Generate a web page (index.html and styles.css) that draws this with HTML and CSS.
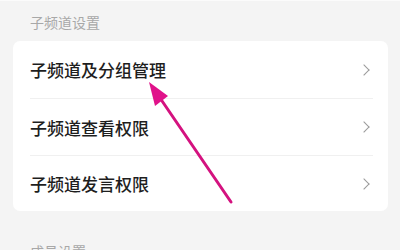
FILE: index.html
```html
<!DOCTYPE html>
<html lang="zh">
<head>
<meta charset="utf-8">
<link rel="stylesheet" href="styles.css">
</head>
<body>
<div class="page">
  <div class="section-title">子频道设置</div>
  <div class="card">
    <div class="row"><span class="label">子频道及分组管理</span><span class="chev"></span></div>
    <div class="row"><span class="label">子频道查看权限</span><span class="chev"></span></div>
    <div class="row"><span class="label">子频道发言权限</span><span class="chev"></span></div>
  </div>
  <div class="section-title second">成员设置</div>
  <svg class="arrow" width="400" height="250" viewBox="0 0 400 250">
    <line x1="231" y1="202" x2="160" y2="98" stroke="#d4127f" stroke-width="3" stroke-linecap="round"/>
    <polygon points="149,82 168,96 155,106" fill="#e0128a"/>
  </svg>
</div>
</body>
</html>
```
FILE: styles.css
```css
html, body {
  margin: 0;
  padding: 0;
  background: #f4f4f4;
}
.page {
  position: relative;
  width: 400px;
  height: 250px;
  overflow: hidden;
  border-top: 1px solid #fbfbfb;
  box-sizing: border-box;
  font-family: "Noto Sans CJK SC", "Noto Sans", sans-serif;
}
.section-title {
  height: 40px;
  padding-left: 30px;
  display: flex;
  align-items: center;
  padding-top: 1px;
  box-sizing: border-box;
  font-size: 14px;
  color: #a8a8a8;
}
.section-title.second {
  margin-top: 19px;
}
.card {
  margin: 0 12px 0 13px;
  background: #ffffff;
  border-radius: 7px;
  padding: 0 15px 0 17px;
}
.row {
  height: 56px;
  display: flex;
  align-items: center;
  justify-content: space-between;
  border-bottom: 1px solid #f0f0f0;
  padding-right: 3px;
}
.row:first-child {
  height: 57px;
}
.row:last-child {
  height: 55px;
  border-bottom: none;
}
.label {
  font-size: 17px;
  font-weight: 500;
  color: #1e1e1e;
}
.chev {
  width: 7px;
  height: 7px;
  border-top: 1.2px solid #9a9a9a;
  border-right: 1.2px solid #9a9a9a;
  transform: rotate(45deg);
  margin-right: 2px;
}
.arrow {
  position: absolute;
  left: 0;
  top: -1px;
}
```
